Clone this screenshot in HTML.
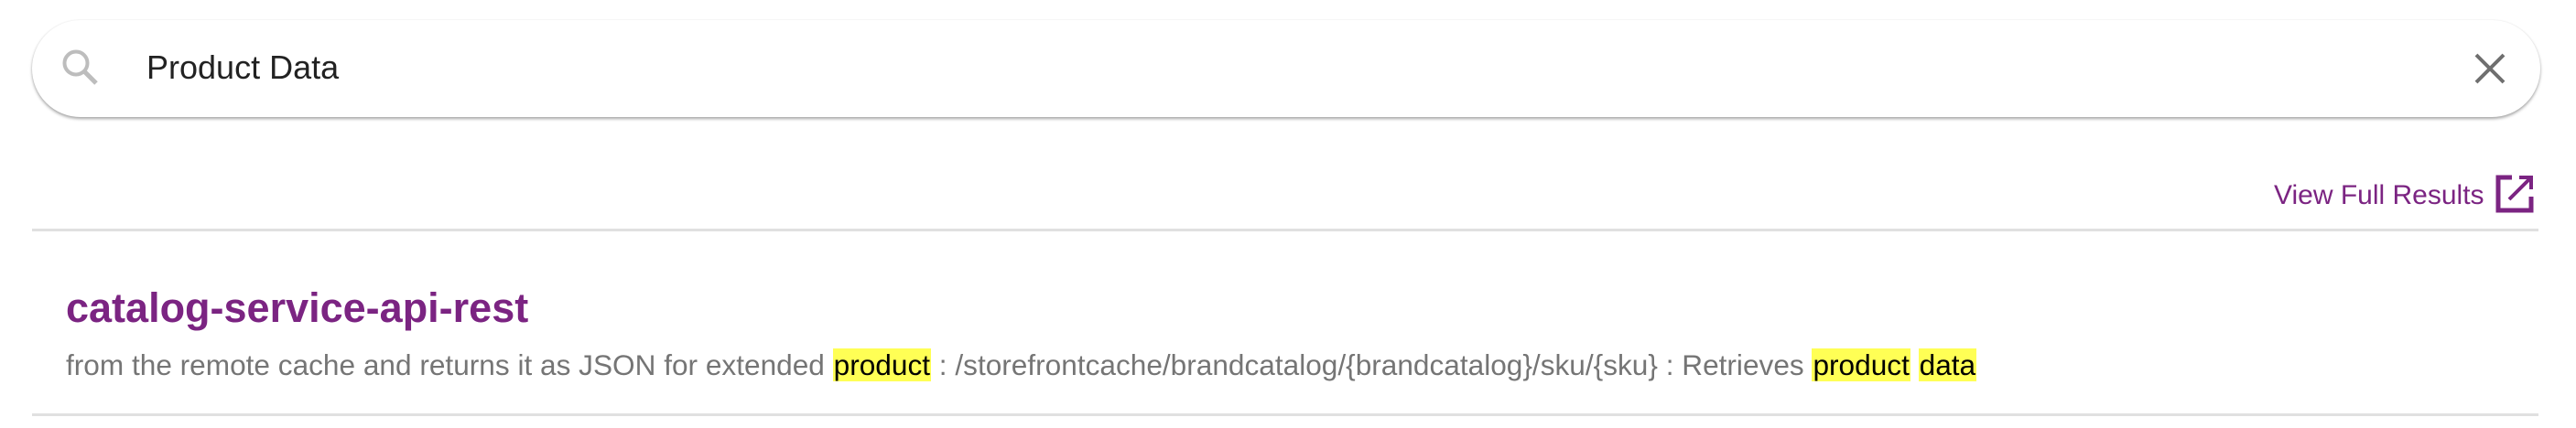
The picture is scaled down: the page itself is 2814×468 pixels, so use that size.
<!DOCTYPE html>
<html><head><meta charset="utf-8"><style>
html,body{margin:0;padding:0;background:#fff;width:2814px;height:468px;overflow:hidden;font-family:"Liberation Sans",Arial,sans-serif;}
.box{position:absolute;left:35px;top:22px;width:2740px;height:106px;border-radius:53px;background:#fff;box-shadow:0 2px 3px rgba(0,0,0,.35),0 0 2px rgba(0,0,0,.06);}
.q{position:absolute;left:160px;top:54px;font-size:36px;color:#222;line-height:40px;}
.hr{position:absolute;left:35px;width:2738px;height:3px;background:#e0e0e0;}
.vfr{position:absolute;left:2484px;top:194px;font-size:30px;color:#7b2482;line-height:40px;}
.title{position:absolute;left:72px;top:312px;font-size:45px;font-weight:bold;color:#7b2482;line-height:50px;}
.snip{position:absolute;left:72px;top:380px;font-size:31.6px;color:#757575;line-height:38px;white-space:nowrap;}
.hl{background:#ffff55;color:#000;padding:0 1px;}
</style></head><body>
<div class="box"></div>
<svg style="position:absolute;left:66px;top:52px" width="44" height="44" viewBox="0 0 44 44"><circle cx="17" cy="17" r="12.5" fill="none" stroke="#bdbdbd" stroke-width="4"/><path d="M26 26 L39 39" stroke="#bdbdbd" stroke-width="5"/></svg>
<div class="q">Product Data</div>
<svg style="position:absolute;left:2702px;top:58px" width="36" height="34" viewBox="0 0 36 34"><path d="M3 2 L33 32 M33 2 L3 32" stroke="#6f6f6f" stroke-width="4"/></svg>
<div class="vfr">View Full Results</div>
<svg style="position:absolute;left:2726px;top:191px" width="42" height="42" viewBox="0 0 42 42"><path d="M18 3 H3 V39 H39 V24" fill="none" stroke="#7b2482" stroke-width="5"/><path d="M26 3 H39 V16 M39 3 L15 27" fill="none" stroke="#7b2482" stroke-width="4"/></svg>
<div class="hr" style="top:250px"></div>
<div class="title">catalog-service-api-rest</div>
<div class="snip">from the remote cache and returns it as JSON for extended <span class="hl">product</span> : /storefrontcache/brandcatalog/{brandcatalog}/sku/{sku} : Retrieves <span class="hl">product</span> <span class="hl">data</span></div>
<div class="hr" style="top:452px"></div>
</body></html>
